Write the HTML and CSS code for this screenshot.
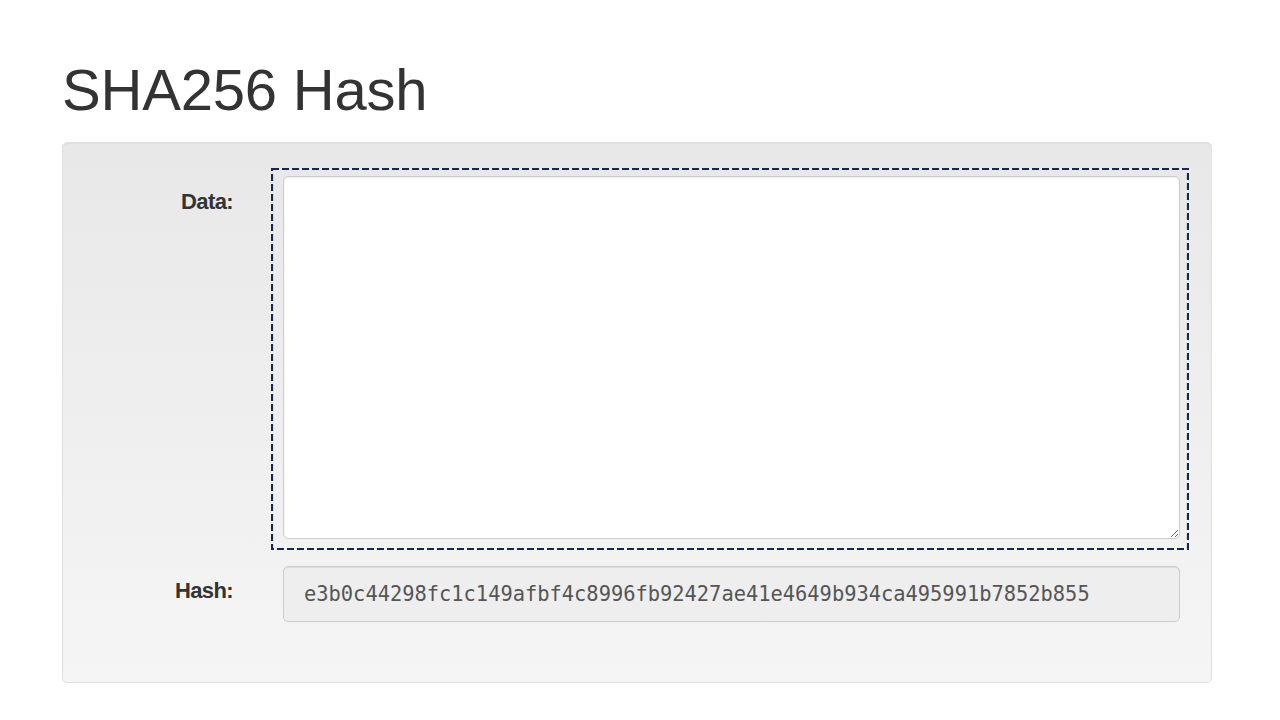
FILE: index.html
```html
<!DOCTYPE html>
<html lang="en">
<head>
<meta charset="utf-8">
<title>SHA256 Hash</title>
<link rel="stylesheet" href="styles.css">
</head>
<body>
  <h1 class="title">SHA256 Hash</h1>
  <form class="well">
    <label class="form-label label-data" for="data">Data:</label>
    <div class="field-wrap">
      <textarea id="data" class="textarea"></textarea>
      <svg class="focus-ring" viewBox="0 0 918 382" aria-hidden="true">
        <rect x="1" y="1" width="916" height="380" fill="none" stroke="#15274d" stroke-width="2.2" stroke-dasharray="7 3"/>
      </svg>
    </div>
    <label class="form-label label-hash" for="hash">Hash:</label>
    <input id="hash" class="hash-input" type="text" readonly value="e3b0c44298fc1c149afbf4c8996fb92427ae41e4649b934ca495991b7852b855">
  </form>
</body>
</html>
```

FILE: styles.css
```css
html, body {
  margin: 0;
  padding: 0;
  background: #ffffff;
}

body {
  padding: 0 0 0 62px;
  font-family: "Liberation Sans", Arial, sans-serif;
  color: #333333;
}

.title {
  margin: 57px 0 19px 0;
  font-size: 58px;
  line-height: 66px;
  font-weight: normal;
  color: #333333;
  letter-spacing: -0.2px;
}

.well {
  box-sizing: border-box;
  width: 1150px;
  height: 541px;
  margin: 0;
  padding: 33px 31px 0 0;
  border: 1px solid #e0e0e0;
  border-radius: 5px;
  background: linear-gradient(to bottom, #e8e8e8 0%, #f5f5f5 100%);
  box-shadow: inset 0 1px 1px rgba(0, 0, 0, 0.05);
  display: grid;
  grid-template-columns: 170px 1fr;
  column-gap: 50px;
  row-gap: 27px;
  align-items: start;
  align-content: start;
}

.form-label {
  text-align: right;
  font-weight: bold;
  font-size: 22px;
  line-height: 26px;
  letter-spacing: -0.6px;
  color: #333333;
}

.label-data {
  padding-top: 13px;
}

.label-hash {
  padding-top: 12px;
}

.field-wrap {
  position: relative;
  height: 363px;
}

.textarea {
  box-sizing: border-box;
  display: block;
  width: 100%;
  height: 363px;
  margin: 0;
  padding: 8px 12px;
  border: 1px solid #cccccc;
  border-radius: 5px;
  background: #ffffff;
  box-shadow: inset 0 1px 2px rgba(0, 0, 0, 0.08);
  font-family: "DejaVu Sans Mono", monospace;
  font-size: 18px;
  resize: vertical;
  outline: none;
}

.focus-ring {
  position: absolute;
  left: -12px;
  top: -8px;
  width: 918px;
  height: 382px;
  pointer-events: none;
}

.hash-input {
  box-sizing: border-box;
  display: block;
  width: 100%;
  height: 56px;
  margin: 0;
  padding: 0 20px;
  border: 1px solid #cccccc;
  border-radius: 5px;
  background: #eeeeee;
  box-shadow: inset 0 1px 1px rgba(0, 0, 0, 0.075);
  font-family: "DejaVu Sans Mono", monospace;
  font-size: 20.4px;
  color: #555555;
  outline: none;
}
```
